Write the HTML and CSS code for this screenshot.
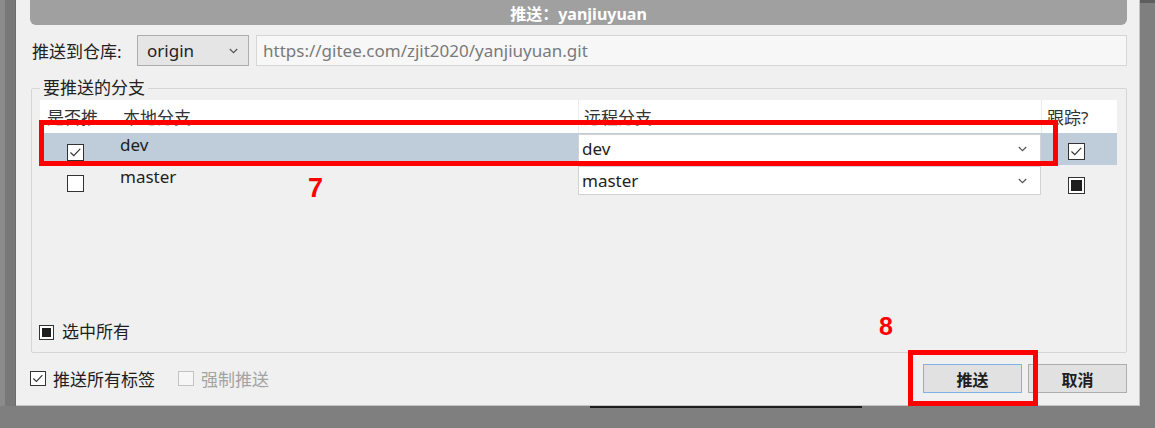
FILE: index.html
```html
<!DOCTYPE html>
<html lang="zh-CN">
<head>
<meta charset="utf-8">
<title>推送：yanjiuyuan</title>
<link rel="stylesheet" href="styles.css">
</head>
<body>
<div class="screen">
  <div class="top">
    <div class="edge-left"></div>
    <div class="dialog">
      <div class="titlebar">推送：yanjiuyuan</div>

      <div class="repo-row">
        <span class="label">推送到仓库:</span>
        <div class="combo origin">
          <span>origin</span>
          <svg class="chev" width="9" height="6" viewBox="0 0 9 6"><polyline points="0.8,1 4.5,4.7 8.2,1" fill="none" stroke="#555" stroke-width="1.2"/></svg>
        </div>
        <div class="url">https://gitee.com/zjit2020/yanjiuyuan.git</div>
      </div>

      <fieldset class="group">
        <legend>要推送的分支</legend>
        <div class="group-body">
          <div class="table">
            <div class="row head">
              <div class="hc c1">是否推</div>
              <div class="hc c2">本地分支</div>
              <div class="hc c3">远程分支</div>
              <div class="hc c4">跟踪?</div>
            </div>
            <div class="row selected">
              <div class="bc c1"><span class="cb big"><svg width="15" height="15" viewBox="0 0 15 15"><polyline points="2.5,7.5 5.8,10.6 12.2,3.8" fill="none" stroke="#333" stroke-width="1.2"/></svg></span></div>
              <div class="bc c2 name">dev</div>
              <div class="bc c3">
                <div class="combo remote"><span>dev</span><svg class="chev" width="9" height="6" viewBox="0 0 9 6"><polyline points="0.8,1 4.5,4.7 8.2,1" fill="none" stroke="#555" stroke-width="1.2"/></svg></div>
              </div>
              <div class="bc c4"><span class="cb big"><svg width="15" height="15" viewBox="0 0 15 15"><polyline points="2.5,7.5 5.8,10.6 12.2,3.8" fill="none" stroke="#333" stroke-width="1.2"/></svg></span></div>
            </div>
            <div class="row">
              <div class="bc c1"><span class="cb big"></span></div>
              <div class="bc c2 name">master</div>
              <div class="bc c3">
                <div class="combo remote"><span>master</span><svg class="chev" width="9" height="6" viewBox="0 0 9 6"><polyline points="0.8,1 4.5,4.7 8.2,1" fill="none" stroke="#555" stroke-width="1.2"/></svg></div>
              </div>
              <div class="bc c4"><span class="cb big partial"><span class="fill"></span></span></div>
            </div>
          </div>

          <div class="select-all">
            <span class="cb partial"><span class="fill"></span></span>
            <span>选中所有</span>
          </div>
        </div>
      </fieldset>

      <div class="footer">
        <div class="opt">
          <span class="cb"><svg width="15" height="15" viewBox="0 0 15 15"><polyline points="2.5,7.5 5.8,10.6 12.2,3.8" fill="none" stroke="#333" stroke-width="1.2"/></svg></span>
          <span>推送所有标签</span>
        </div>
        <div class="opt disabled">
          <span class="cb"></span>
          <span>强制推送</span>
        </div>
        <div class="buttons">
          <button class="btn default">推送</button>
          <button class="btn">取消</button>
        </div>
      </div>

      <div class="mark box-row"></div>
      <div class="mark box-btn"></div>
      <div class="num n7">7</div>
      <div class="num n8">8</div>
    </div>
    <div class="edge-right"></div>
  </div>
  <div class="bottom-strip"><div class="line"></div></div>
</div>
</body>
</html>
```

FILE: styles.css
```css
* { box-sizing: border-box; }
html, body { margin: 0; padding: 0; }
body {
  width: 1155px;
  height: 428px;
  overflow: hidden;
  background: #7f7f7f;
  font-family: "Noto Sans", "Noto Sans CJK SC", sans-serif;
  font-size: 17px;
  color: #1e1e1e;
}
.screen { display: flex; flex-direction: column; height: 428px; }
.top { display: flex; height: 406px; }
.edge-left {
  width: 16px;
  flex: none;
  background: #787878;
  border-left: 5px solid #8b8b8b;
  border-right: 1px solid #6c6c6c;
}
.dialog {
  position: relative;
  width: 1124px;
  flex: none;
  background: #f0f0f0;
  padding: 0 12px 0 14px;
  border-right: 1px solid #c4c4c4;
  border-bottom: 1px solid #c4c4c4;
  display: flex;
  flex-direction: column;
}
.edge-right { flex: 1; background: #7f7f7f; border-top: 3px solid #5e5e5e; }
.bottom-strip { height: 22px; background: #7f7f7f; padding-left: 590px; }
.bottom-strip .line { width: 272px; height: 2px; background: #1c1c1c; }

.titlebar {
  height: 25px;
  flex: none;
  background: #a0a0a0;
  border-radius: 0 0 6px 6px;
  color: #fff;
  font-weight: 700;
  font-size: 16px;
  display: flex;
  align-items: center;
  justify-content: center;
}

.repo-row {
  display: flex;
  align-items: center;
  height: 31px;
  margin-top: 10px;
  flex: none;
}
.label { width: 105px; margin-left: 2px; flex: none; color: #222; }
.combo {
  display: flex;
  align-items: center;
  justify-content: space-between;
  height: 31px;
}
.combo.origin {
  width: 112px;
  flex: none;
  background: #e5e5e5;
  border: 1px solid #adadad;
  padding: 0 10px 0 9px;
}
.url {
  flex: 1;
  margin-left: 7px;
  height: 31px;
  background: #f7f7f7;
  border: 1px solid #d6d6d6;
  color: #7a7a7a;
  padding-left: 6px;
  display: flex;
  align-items: center;
}

.group {
  margin: 12px 0 0 1px;
  padding: 0 9px 0 8px;
  border: 1px solid #d5d5d5;
  border-radius: 2px;
  min-width: 0;
}
.group legend {
  padding: 0 3px;
  line-height: 20px;
  font-size: 17px;
  color: #222;
}
.group-body {
  margin-top: 2px;
  height: 252px;
  display: flex;
  flex-direction: column;
}
.table { display: flex; flex-direction: column; }
.row {
  display: grid;
  grid-template-columns: 75px 463px 463px 76px;
  height: 32px;
}
.row.head { height: 33px; background: #fff; }
.row.selected { background: #bfcddb; }
.hc { display: flex; align-items: center; color: #333; white-space: nowrap; overflow: hidden; }
.hc.c1 { padding-left: 7px; }
.hc.c2 { padding-left: 8px; }
.hc.c3 { padding-left: 5px; border-left: 1px solid #ececec; }
.hc.c4 { padding-left: 5px; border-left: 1px solid #ececec; }
.bc.c1 { padding: 9px 0 0 27px; }
.bc.c4 { padding: 8px 0 0 27px; }
.bc.name { padding: 1px 0 0 5px; line-height: 22px; }
.bc.c3 { padding-top: 1px; }
.combo.remote {
  height: 29px;
  background: #fff;
  border: 1px solid #d2d2d2;
  padding: 0 13px 0 3px;
}

.cb {
  width: 16px;
  height: 16px;
  border: 1px solid #333;
  background: #fff;
  display: inline-flex;
  align-items: center;
  justify-content: center;
  flex: none;
}
.cb.big { width: 17px; height: 17px; }
.cb svg { display: block; }
.cb .fill { width: 10px; height: 10px; background: #1e1e1e; }
.cb.big .fill { width: 11px; height: 11px; }

.select-all {
  margin-top: auto;
  margin-bottom: 9px;
  margin-left: -1px;
  display: flex;
  align-items: center;
  gap: 8px;
  line-height: 22px;
}
.select-all .cb { width: 15px; height: 15px; }
.select-all .cb .fill { width: 9px; height: 9px; }

.footer {
  flex: 1;
  display: flex;
  align-items: center;
  padding-bottom: 1px;
}
.opt { display: flex; align-items: center; gap: 7px; }
.opt .cb { width: 16px; height: 15px; }
.opt.disabled { margin-left: 23px; color: #a3a3a3; }
.opt.disabled .cb { border-color: #c3c3c3; background: #f6f6f6; }
.buttons { margin-left: auto; display: flex; gap: 6px; }
.btn {
  width: 99px;
  height: 29px;
  background: #e1e1e1;
  border: 1px solid #adadad;
  font-family: "Noto Sans CJK SC", sans-serif;
  font-size: 16px;
  font-weight: 700;
  color: #1e1e1e;
  padding: 0;
}
.btn.default { border-color: #7fb3e6; }

.mark { position: absolute; border: 5px solid #f00; }
.box-row { left: 23px; top: 120px; width: 1019px; height: 46px; }
.box-btn { left: 892px; top: 350px; width: 130px; height: 56px; }
.num {
  position: absolute;
  font-family: "Liberation Sans", sans-serif;
  font-weight: 700;
  color: #f00;
  line-height: 1;
}
.n7 { left: 292px; top: 175px; font-size: 27px; }
.n8 { left: 863px; top: 314px; font-size: 25px; }
```
